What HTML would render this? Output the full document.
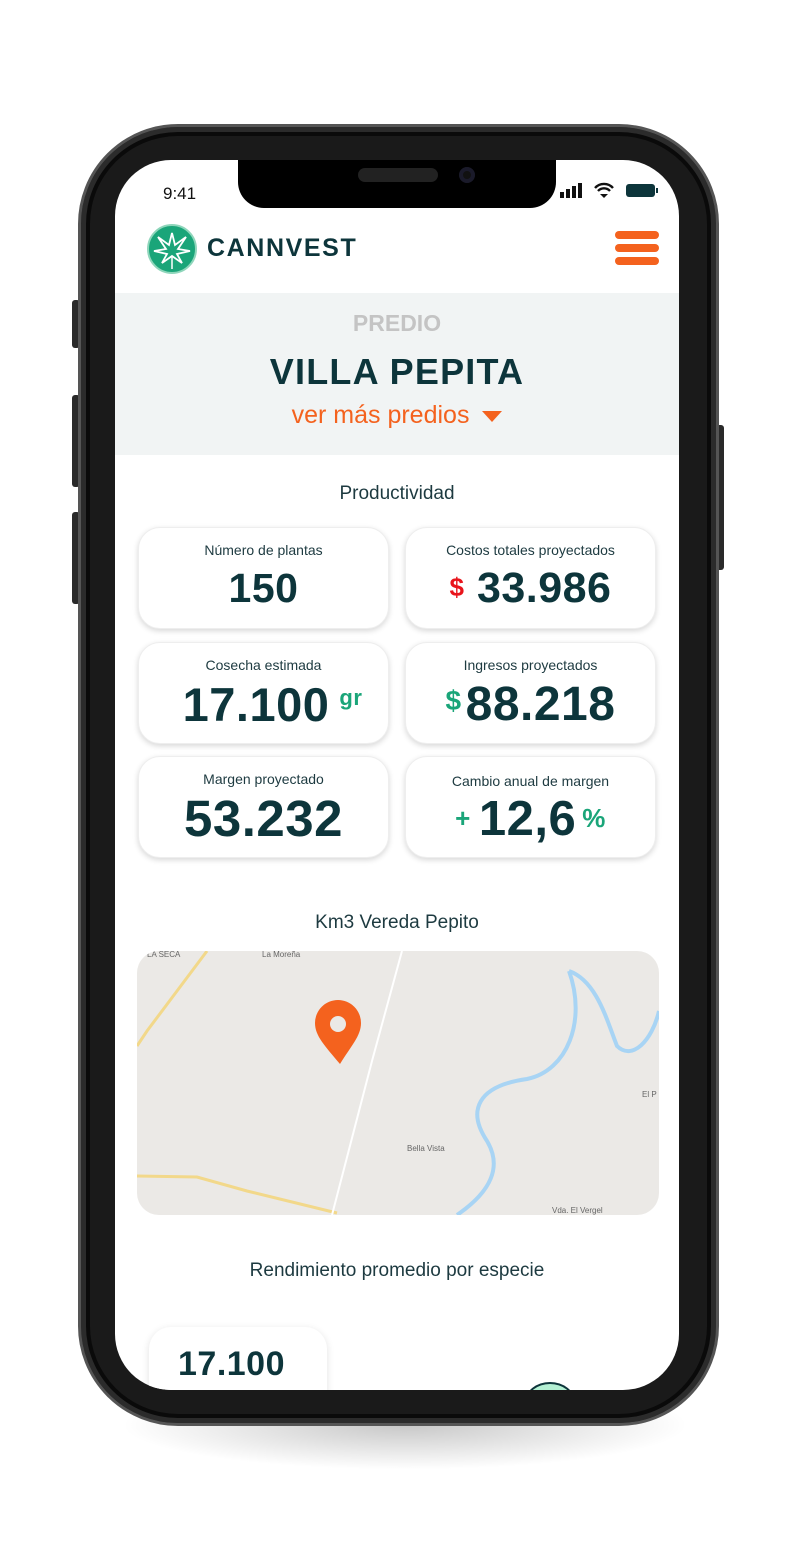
<!DOCTYPE html>
<html><head><meta charset="utf-8"><style>
*{margin:0;padding:0;box-sizing:border-box}
body{width:812px;height:1560px;background:#fff;position:relative;overflow:hidden;font-family:"Liberation Sans",sans-serif;color:#0d353b}
.abs{position:absolute}
.shadow{left:120px;top:1380px;width:570px;height:90px;border-radius:50%;background:radial-gradient(ellipse at center,rgba(0,0,0,.22),rgba(0,0,0,0) 70%)}
.frame{left:78px;top:124px;width:641px;height:1302px;border-radius:100px;background:#1a1a1a;border:3px solid #555;box-shadow:inset 0 0 0 5px #2b2b2b,inset 0 0 0 9px #0a0a0a}
.btn{background:#2a2a2a;border-radius:3px}
.screen{left:115px;top:160px;width:564px;height:1230px;border-radius:56px;background:#fff;overflow:hidden}
.notch{left:123px;top:0;width:318px;height:48px;background:#000;border-radius:0 0 26px 26px}
.card{position:absolute;width:251px;height:102px;background:#fff;border-radius:22px;box-shadow:0 2px 6px rgba(0,0,0,.16);border:1px solid #eee;text-align:center}
.lab{position:absolute;left:0;right:0;top:14px;font-size:14px;color:#1d3a40}
.num{position:absolute;left:0;right:0;font-weight:bold;color:#0d353b;letter-spacing:0.5px}
.c{text-align:center;position:absolute;left:0;right:0}
</style></head><body>
<div class="abs shadow"></div>
<div class="abs btn" style="left:72px;top:300px;width:8px;height:48px"></div>
<div class="abs btn" style="left:72px;top:395px;width:8px;height:92px"></div>
<div class="abs btn" style="left:72px;top:512px;width:8px;height:92px"></div>
<div class="abs btn" style="left:716px;top:425px;width:8px;height:145px"></div>
<div class="abs frame"></div>
<div class="abs screen">
  <div class="abs notch"></div>
  <div class="abs" style="left:243px;top:8px;width:80px;height:14px;border-radius:7px;background:#222"></div>
  <div class="abs" style="left:344px;top:7px;width:16px;height:16px;border-radius:50%;background:#111;box-shadow:inset 0 0 0 4px #1a1a2a"></div>
  <div class="abs" style="left:48px;top:24px;font-size:17px;color:#111">9:41</div>
  <svg class="abs" style="left:443px;top:22px" width="105" height="18"><rect x="2" y="10" width="4" height="6" fill="#111"/><rect x="8" y="7" width="4" height="9" fill="#111"/><rect x="14" y="4" width="4" height="12" fill="#111"/><rect x="20" y="1" width="4" height="15" fill="#111"/>
  <path d="M37 6 a12 12 0 0 1 18 0 M40 9 a8 8 0 0 1 12 0" stroke="#111" stroke-width="2.4" fill="none"/><path d="M42 12 L46 16 L50 12 Z" fill="#111"/>
  <rect x="68" y="2" width="29" height="13" rx="3" fill="#0d353b"/><rect x="98" y="6" width="2" height="5" fill="#0d353b"/></svg>
  <!-- header -->
  <svg class="abs" style="left:31px;top:63px" width="52" height="52"><circle cx="26" cy="26" r="24" fill="#1aa579" stroke="#8fd6bb" stroke-width="2"/><path d="M26 10 L29 22 L40 14 L32 26 L44 28 L31 31 L36 40 L26 33 L16 40 L21 31 L8 28 L20 26 L12 14 L23 22 Z" fill="none" stroke="#fff" stroke-width="1.8"/><path d="M26 33 L26 46" stroke="#fff" stroke-width="1.5"/></svg>
  <div class="abs" style="left:92px;top:74px;font-size:25px;font-weight:bold;color:#0d353b;letter-spacing:1.6px">CANNVEST</div>
  <div class="abs" style="left:500px;top:71px;width:44px;height:8px;border-radius:4px;background:#f4621e"></div>
  <div class="abs" style="left:500px;top:84px;width:44px;height:8px;border-radius:4px;background:#f4621e"></div>
  <div class="abs" style="left:500px;top:97px;width:44px;height:8px;border-radius:4px;background:#f4621e"></div>
  <!-- predio -->
  <div class="abs" style="left:0;top:133px;width:564px;height:162px;background:#f1f4f4"></div>
  <div class="c" style="top:150px;font-size:23px;font-weight:bold;color:#c4c4c4">PREDIO</div>
  <div class="c" style="top:191px;font-size:36px;font-weight:bold;color:#0d353b;letter-spacing:1.2px">VILLA PEPITA</div>
  <div class="c" style="top:241px;font-size:25px;color:#f4621e">ver más predios <span style="display:inline-block;width:0;height:0;border-left:10px solid transparent;border-right:10px solid transparent;border-top:11px solid #f4621e;margin-left:6px;vertical-align:middle"></span></div>
  <div class="c" style="top:323px;font-size:19px;color:#1d3a40">Productividad</div>
  <!-- cards -->
  <div class="card" style="left:23px;top:367px"><div class="lab">Número de plantas</div><div class="num" style="top:37px;font-size:41px">150</div></div>
  <div class="card" style="left:290px;top:367px"><div class="lab">Costos totales proyectados</div><div class="num" style="top:36px;font-size:43px"><span style="color:#e8141b;font-size:26px;vertical-align:6px">$</span> 33.986</div></div>
  <div class="card" style="left:23px;top:482px"><div class="lab">Cosecha estimada</div><div class="num" style="top:34px;font-size:47px;padding-left:18px">17.100<span style="color:#1aa579;font-size:22px;vertical-align:16px;margin-left:10px">gr</span></div></div>
  <div class="card" style="left:290px;top:482px"><div class="lab">Ingresos proyectados</div><div class="num" style="top:34px;font-size:48px"><span style="color:#1aa579;font-size:28px;vertical-align:10px;margin-right:4px">$</span>88.218</div></div>
  <div class="card" style="left:23px;top:596px"><div class="lab">Margen proyectado</div><div class="num" style="top:32px;font-size:51px">53.232</div></div>
  <div class="card" style="left:290px;top:596px"><div class="lab" style="top:16px">Cambio anual de margen</div><div class="num" style="top:34px;font-size:49px"><span style="color:#1aa579;font-size:26px;vertical-align:8px;margin-right:8px">+</span>12,6<span style="color:#1aa579;font-size:26px;vertical-align:8px;margin-left:6px">%</span></div></div>
  <div class="c" style="top:752px;font-size:19px;color:#1d3a40">Km3 Vereda Pepito</div>
  <!-- map -->
  <div class="abs" style="left:22px;top:791px;width:522px;height:264px;border-radius:22px;overflow:hidden;background:#ebe9e6">
    <svg width="522" height="264">
      <path d="M70 0 L40 40 L10 80 L0 95" stroke="#f2d88a" stroke-width="3" fill="none"/>
      <path d="M0 225 L60 226 L110 240 L200 262" stroke="#f2d88a" stroke-width="3" fill="none"/>
      <path d="M265 0 L235 110 L195 264" stroke="#fff" stroke-width="2" fill="none"/>
      <path d="M432 20 C460 30 470 70 480 95 C495 110 515 90 522 60 M432 20 C450 70 430 120 390 128 C340 135 330 160 350 190 C365 215 355 240 320 264" stroke="#a8d4f4" stroke-width="4" fill="none"/>
      <text x="125" y="6" font-size="8" fill="#666" font-family="Liberation Sans">La Moreña</text>
      <text x="270" y="200" font-size="8" fill="#666" font-family="Liberation Sans">Bella Vista</text>
      <text x="505" y="146" font-size="8" fill="#666" font-family="Liberation Sans">El P</text>
      <text x="415" y="262" font-size="8" fill="#666" font-family="Liberation Sans">Vda. El Vergel</text>
      <text x="10" y="6" font-size="8" fill="#666" font-family="Liberation Sans">LA SECA</text>
      <path d="M203 113 C188 95 178 85 178 72 A22 22 0 0 1 224 72 C224 85 214 95 203 113 Z" fill="#f4621e"/>
      <circle cx="201" cy="73" r="8" fill="#ebe9e6"/>
    </svg>
  </div>
  <div class="c" style="top:1100px;font-size:19px;color:#1d3a40">Rendimiento promedio por especie</div>
  <div class="abs" style="left:34px;top:1167px;width:178px;height:90px;border-radius:22px;background:#fff;box-shadow:0 2px 8px rgba(0,0,0,.12)"></div>
  <div class="abs" style="left:63px;top:1185px;font-size:34px;font-weight:bold;color:#0d353b;letter-spacing:0.5px">17.100</div>
  <div class="abs" style="left:410px;top:1222px;width:50px;height:40px;border-radius:50% 50% 0 0;background:#b3f0d3;border:2px solid #0d353b"></div>
</div>
</body></html>
